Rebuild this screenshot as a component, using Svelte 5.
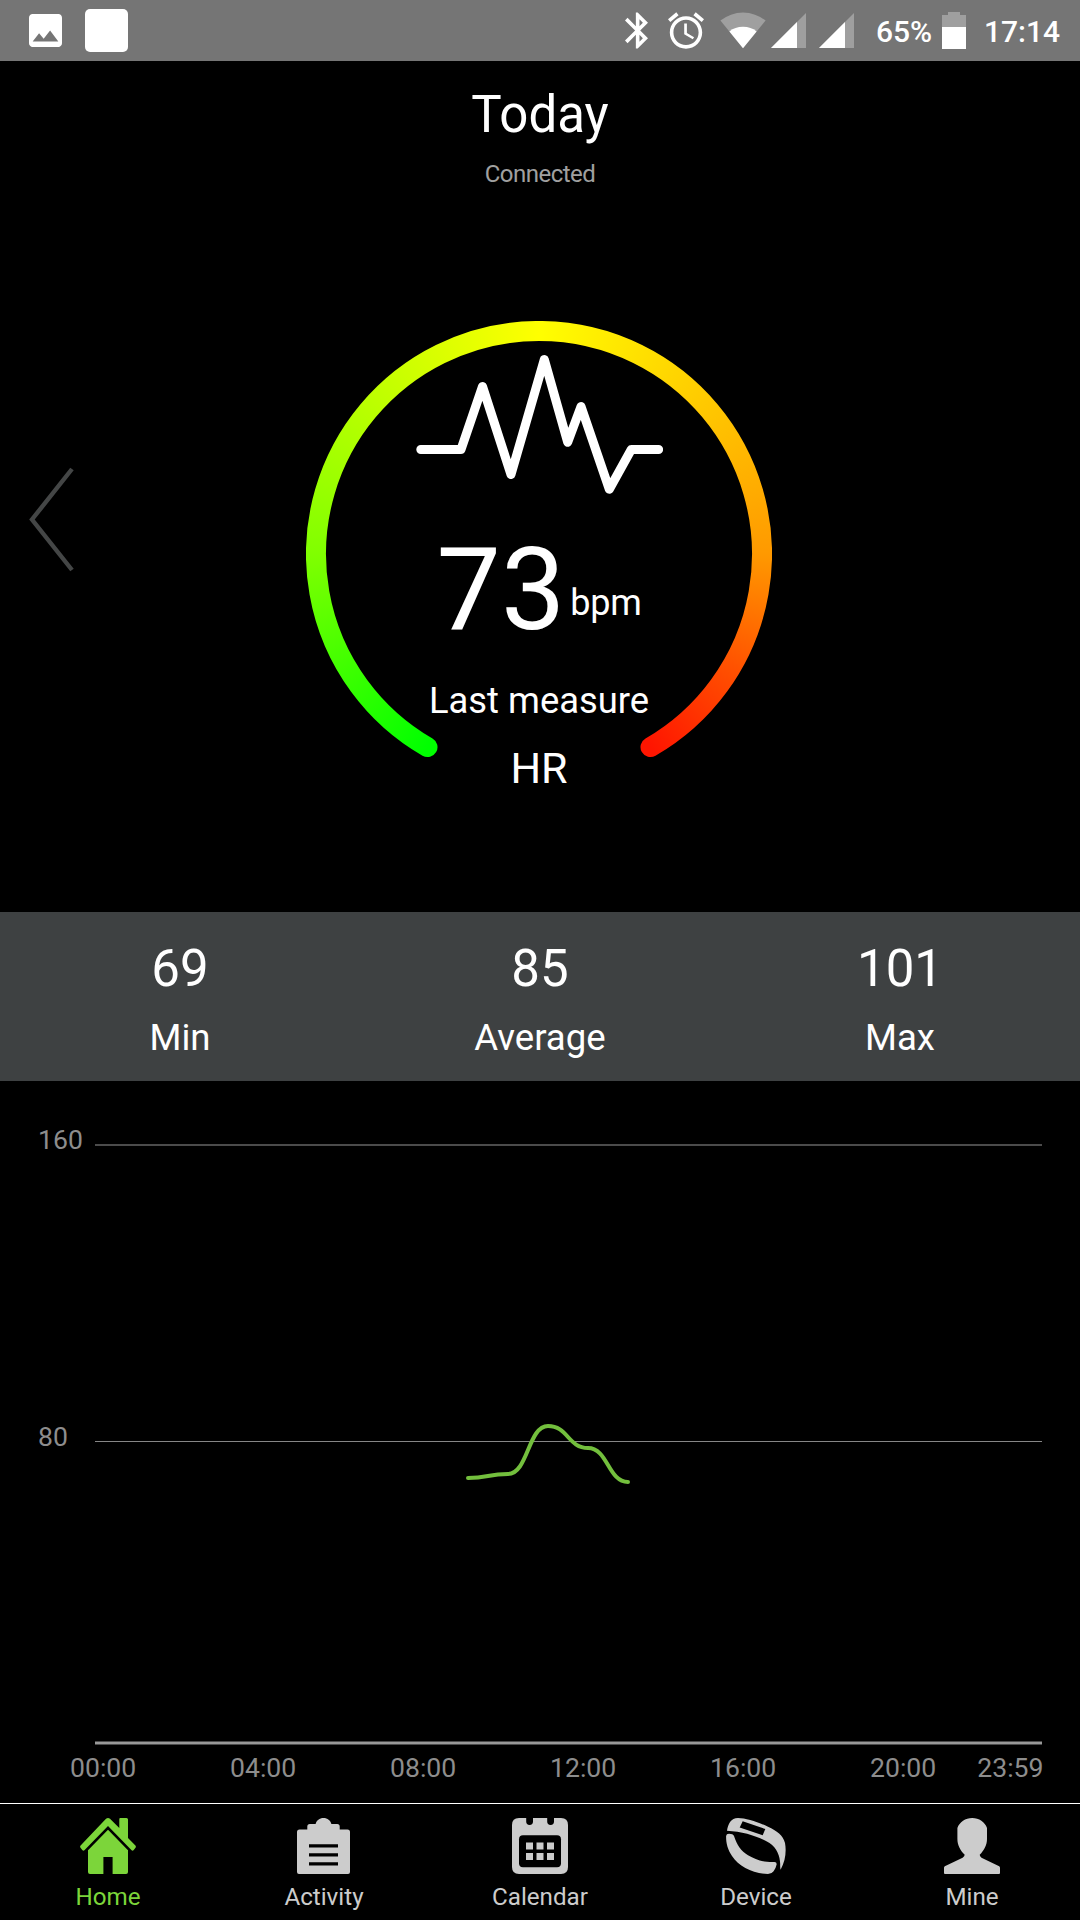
<script lang="ts">
    const stats = [
        {value: 69, label: 'Min'},
        {value: 85, label: 'Average'},
        {value: 101, label: 'Max'}
    ];

    const tabs = ['Home', 'Activity', 'Calendar', 'Device', 'Mine'];
    let active = 'Home';

    const times = ['00:00', '04:00', '08:00', '12:00', '16:00', '20:00'];

    // chart points, in the coordinates of the chart svg
    const points = [
        [468, 397],
        [508, 393],
        [548, 345],
        [588, 367],
        [628, 401]
    ];

    function smooth(pts) {
        let d = `M${pts[0][0]} ${pts[0][1]}`;
        for (let i = 1; i < pts.length; i++) {
            const [x0, y0] = pts[i - 1];
            const [x1, y1] = pts[i];
            const mid = (x0 + x1) / 2;
            d += ` C${mid} ${y0} ${mid} ${y1} ${x1} ${y1}`;
        }
        return d;
    }
</script>

<div class="app">
  <div class="status-bar">
    <svg class="image" width="33" height="33" viewBox="3 3 18 18">
      <path d="M21 19V5c0-1.1-.9-2-2-2H5c-1.1 0-2 .9-2 2v14c0 1.1.9 2 2 2h14c1.1 0 2-.9 2-2zM8.5 13.5l2.5 3.01L14.5 12l4.5 6H5l3.5-4.5z" />
    </svg>
    <div class="blank"></div>
    <div class="spacer"></div>
    <svg class="bluetooth" width="23" height="37" viewBox="5 2 12.71 20">
      <path d="M17.71 7.71L12 2h-1v7.59L6.41 5 5 6.41 10.59 12 5 17.59 6.41 19 11 14.41V22h1l5.71-5.71-4.3-4.29 4.3-4.29zM13 5.83l1.88 1.88L13 9.59V5.83zm1.88 10.46L13 18.17v-3.76l1.88 1.88z" />
    </svg>
    <svg class="alarm" width="36" height="37" viewBox="2 1.86 20 20.14">
      <path d="M22 5.72l-4.6-3.86-1.29 1.53 4.6 3.86L22 5.72zM7.88 3.39L6.6 1.86 2 5.71l1.29 1.53 4.59-3.85zM12.5 8H11v6l4.75 2.85.75-1.23-4-2.37V8zM12 4c-4.97 0-9 4.03-9 9s4.02 9 9 9c4.97 0 9-4.03 9-9s-4.03-9-9-9zm0 16c-3.87 0-7-3.13-7-7s3.13-7 7-7 7 3.13 7 7-3.13 7-7 7z" />
    </svg>
    <svg class="wifi" width="46" height="37" viewBox="0 0 46 37">
      <path class="dim" d="M23 36.3L.4 8.6A36 36 0 0 1 45.6 8.6z" />
      <path d="M23 36.3L9.4 19.4Q15 14.8 23 14.8T36.6 19.4z" />
    </svg>
    <svg class="signal" width="35" height="35" viewBox="0 0 35 35">
      <path class="dim" d="M0 35L35 0V35z" />
      <path d="M0 35L26 9V35z" />
    </svg>
    <svg class="signal second" width="35" height="35" viewBox="0 0 35 35">
      <path class="dim" d="M0 35L35 0V35z" />
      <path d="M0 35L26 9V35z" />
    </svg>
    <span class="percent">65%</span>
    <svg class="battery" width="24" height="37" viewBox="0 0 24 37">
      <path class="dim" d="M0 3H6V0H18V3H24V15H0z" />
      <path d="M0 15H24V37H0z" />
    </svg>
    <span class="clock">17:14</span>
  </div>

  <div class="header">
    <div class="title">Today</div>
    <div class="connection">Connected</div>
  </div>

  <div class="hero">
    <svg class="chevron" width="48" height="110" viewBox="0 0 48 110">
      <path d="M45 4L5 54.5L45 105" />
    </svg>
    <div class="gauge">
      <svg class="ring" width="466" height="466" viewBox="0 0 466 466">
        <mask id="arc" maskUnits="userSpaceOnUse" x="0" y="0" width="466" height="466">
          <path d="M121.5 426.1A223 223 0 1 1 344.5 426.1" fill="none" stroke="#fff" stroke-width="20" stroke-linecap="round" />
        </mask>
        <foreignObject width="466" height="466" mask="url(#arc)">
          <div class="sweep"></div>
        </foreignObject>
      </svg>
      <div class="reading">
        <svg class="pulse" width="248" height="142" viewBox="415 354 248 142">
          <path d="M420.8 449.5H461L482.5 386.5L511 474.5L544.3 359.5L567.7 442.3L581 406.5L609.3 489.3L631.3 449.5H658.6" />
        </svg>
        <div class="value">
          <span class="number">73</span>
          <span class="unit">bpm</span>
        </div>
        <div class="caption">Last measure</div>
        <div class="kind">HR</div>
      </div>
    </div>
  </div>

  <div class="stats">
    {#each stats as stat}
      <div class="stat">
        <div class="stat-value">{stat.value}</div>
        <div class="stat-label">{stat.label}</div>
      </div>
    {/each}
  </div>

  <svg class="chart" width="1080" height="722" viewBox="0 0 1080 722">
    <rect class="grid-line soft" x="95" y="63" width="947" height="2" />
    <rect class="grid-line" x="95" y="360" width="947" height="1" />
    <rect class="axis-edge" x="95" y="660" width="947" height="4" />
    <rect class="axis" x="95" y="661" width="947" height="2" />
    <text x="38" y="68">160</text>
    <text x="38" y="365">80</text>
    {#each times as time, i}
      <text x={70 + i * 160} y="696">{time}</text>
    {/each}
    <text x="1043.5" y="696" text-anchor="end">23:59</text>
    <path class="line" d={smooth(points)} />
  </svg>

  <div class="tabs">
    {#each tabs as tab}
      <button class="tab" class:active={tab === active} on:click={() => active = tab}>
        {#if tab === 'Home'}
          <svg width="56" height="56" viewBox="0 0 56 56">
            <path d="M26 .8Q28-.8 30 .8L39.3 10V1Q39.3 0 40.3 0H46.5Q48 0 48 1.5V20L55.4 27.6Q56.3 28.6 55.5 29.8L53.5 32.3Q52.6 33.2 51.6 32.3L28 8L4.4 32.3Q3.4 33.2 2.5 32.3L.5 29.8Q-.3 28.6 .6 27.6z" />
            <path d="M28 11.7L48 32.3V54Q48 56 46 56H32.6V39H23.4V56H10Q8 56 8 54V32.3z" />
          </svg>
        {:else if tab === 'Activity'}
          <svg width="54" height="56" viewBox="0 0 54 56">
            <path d="M2.5 11.5H10.3V8.5Q10.3 6 12.8 6H18.6C19.5 2.5 22.5 0 26.5 0S33.5 2.5 34.4 6H40.2Q42.7 6 42.7 8.5V11.5H50.5Q53 11.5 53 14V54Q53 56 51 56H2Q0 56 0 54V14Q0 11.5 2.5 11.5z" />
            <path class="cut" d="M12 26.2H41V29.4H12zM12 35.2H41V38.4H12zM12 44.2H41V47.4H12z" />
          </svg>
        {:else if tab === 'Calendar'}
          <svg width="56" height="56" viewBox="0 0 56 56">
            <path d="M7 0H14.2V3.6A3.4 3.4 0 0 0 21 3.6V0H35.2V3.6A3.4 3.4 0 0 0 42 3.6V0H49Q56 0 56 7V49Q56 56 49 56H7Q0 56 0 49V7Q0 0 7 0z" />
            <rect class="cut" x="7" y="17.3" width="42" height="32" rx="4" />
            <path d="M14 24.6h7v7h-7zM24.5 24.6h7v7h-7zM35 24.6h7v7h-7zM14 35h7v7h-7zM24.5 35h7v7h-7zM35 35h7v7h-7z" />
          </svg>
        {:else if tab === 'Device'}
          <svg width="60" height="56" viewBox="0 0 60 56">
            <path d="M1 12.7C2 6 5 0 12 0C20 0 32 4 42 8.7C51 13 57 17 59 25C60.5 33 59.5 43 54.6 51.8Q54 50 54.2 46C54 38 51 30 43.5 25C34 19 18 13.5 1 12.7z" />
            <path d="M.1 18Q.3 15.7 3 15.7Q7 15.7 8 18C11 27 15 33 22 37.3C30 42 37 44.3 48.5 44Q51 44.2 50.6 46.5Q49.8 50.5 47.6 53.2Q45.5 56 42 56C27 55.8 13 48.5 6 38C1.5 31 0 25 .1 18z" />
            <path class="cut" d="M16.7 3.3L39.3 11L36.7 17.2L13.7 9.4z" />
          </svg>
        {:else}
          <svg width="56" height="56" viewBox="0 0 56 56">
            <path d="M28.2 0C35 0 41 4 43 10V21C43 27 40 32.5 35.7 36.8Q35.8 38.5 37.5 39.7L55.2 48.3Q56 48.8 56 49.8V55Q56 56 55 56H1Q0 56 0 55V49.8Q0 48.8 .8 48.3L18.6 39.7Q20.6 38.5 20.7 36.8C16 32 13.4 27 13.4 21V10C15.5 4 21.4 0 28.2 0z" />
          </svg>
        {/if}
        <span>{tab}</span>
      </button>
    {/each}
  </div>
</div>

<style>
    :global(body) {
        margin: 0;
        background-color: #000;
    }

    .app {
        width: 1080px;
        height: 1920px;
        display: flex;
        flex-direction: column;
        overflow: hidden;
        background-color: #000;
        color: #fff;
        font-family: Roboto, sans-serif;
    }

    svg {
        display: block;
        flex: none;
    }

    .status-bar {
        height: 61px;
        box-sizing: border-box;
        padding: 0 20px 0 29px;
        display: flex;
        align-items: center;
        background-color: #757575;
        font-size: 30px;
        font-weight: 500;
        line-height: 62px;
        fill: #fff;
    }

    .blank {
        width: 43px;
        height: 43px;
        margin-left: 23px;
        border-radius: 5px;
        background-color: #fff;
    }

    .spacer {
        flex: 1;
    }

    .dim {
        fill: #9f9f9f;
    }

    .bluetooth {
        margin-right: -1px;
    }

    .alarm {
        margin-left: 21px;
    }

    .wifi {
        margin-left: 16px;
    }

    .signal {
        margin-left: 5px;
    }

    .second {
        margin-left: 13px;
    }

    .percent {
        width: 57px;
        margin-left: 22px;
        padding-top: 2px;
    }

    .battery {
        margin-left: 9px;
    }

    .clock {
        width: 76px;
        margin-left: 18px;
        padding-top: 2px;
    }

    .header {
        height: 127px;
        box-sizing: border-box;
        padding-top: 24px;
        text-align: center;
    }

    .title {
        font-size: 51px;
        line-height: 60px;
    }

    .connection {
        margin-top: 15px;
        font-size: 24px;
        line-height: 28px;
        letter-spacing: -0.5px;
        color: #a0a0a0;
    }

    .hero {
        height: 724px;
        box-sizing: border-box;
        padding: 133px 0 0 27px;
        display: flex;
        align-items: flex-start;
    }

    .chevron {
        margin-top: 144px;
        fill: none;
        stroke: #444646;
        stroke-width: 4.4;
    }

    .gauge {
        display: grid;
        width: 466px;
        margin-left: 231px;
    }

    .ring,
    .reading {
        grid-area: 1 / 1;
    }

    .sweep {
        width: 466px;
        height: 466px;
        background: conic-gradient(from 180deg, #0f0 0deg 30deg, #80ff00 90deg, #ff0 180deg, #ff9900 270deg, #ff5200 300deg, #ff1500 330deg);
    }

    .reading {
        display: flex;
        flex-direction: column;
        align-items: center;
        padding-top: 33px;
    }

    .pulse {
        fill: none;
        stroke: #fff;
        stroke-width: 9;
        stroke-linecap: round;
        stroke-linejoin: round;
    }

    .value {
        display: flex;
        align-items: flex-start;
        margin-top: 44px;
        height: 100px;
    }

    .number {
        font-size: 114.5px;
        line-height: 100px;
    }

    .unit {
        margin: 41px 0 0 5px;
        font-size: 36px;
        line-height: 44px;
        letter-spacing: -0.3px;
    }

    .caption {
        margin-top: 39px;
        font-size: 36.4px;
        line-height: 44px;
    }

    .kind {
        margin-top: 20px;
        font-size: 43px;
        line-height: 50px;
    }

    .stats {
        display: grid;
        grid-template-columns: repeat(3, 1fr);
        height: 169px;
        box-sizing: border-box;
        padding-top: 27px;
        background-color: #3e4142;
        text-align: center;
    }

    .stat-value {
        font-size: 51px;
        line-height: 60px;
    }

    .stat-label {
        margin-top: 17px;
        font-size: 36.6px;
        line-height: 44px;
    }

    .chart {
        font-size: 26.6px;
        fill: #8d8d8d;
    }

    .grid-line {
        fill: #868686;
    }

    .soft {
        fill: #4b4b4b;
    }

    .axis {
        fill: #989898;
    }

    .axis-edge {
        fill: #4b4b4b;
    }

    .line {
        fill: none;
        stroke: #73bf3d;
        stroke-width: 4;
        stroke-linecap: round;
    }

    .tabs {
        height: 117px;
        box-sizing: border-box;
        border-top: 1px solid #fff;
        display: grid;
        grid-template-columns: repeat(5, 1fr);
    }

    .tab {
        display: flex;
        flex-direction: column;
        align-items: center;
        padding: 14px 0 0;
        border: none;
        background: none;
        font-family: inherit;
        font-size: 24.2px;
        line-height: 28px;
        color: #ccc;
        fill: currentColor;
        cursor: pointer;
    }

    .tab span {
        margin-top: 9px;
    }

    .active {
        color: #7cd53a;
    }

    .cut {
        fill: #000;
    }
</style>
